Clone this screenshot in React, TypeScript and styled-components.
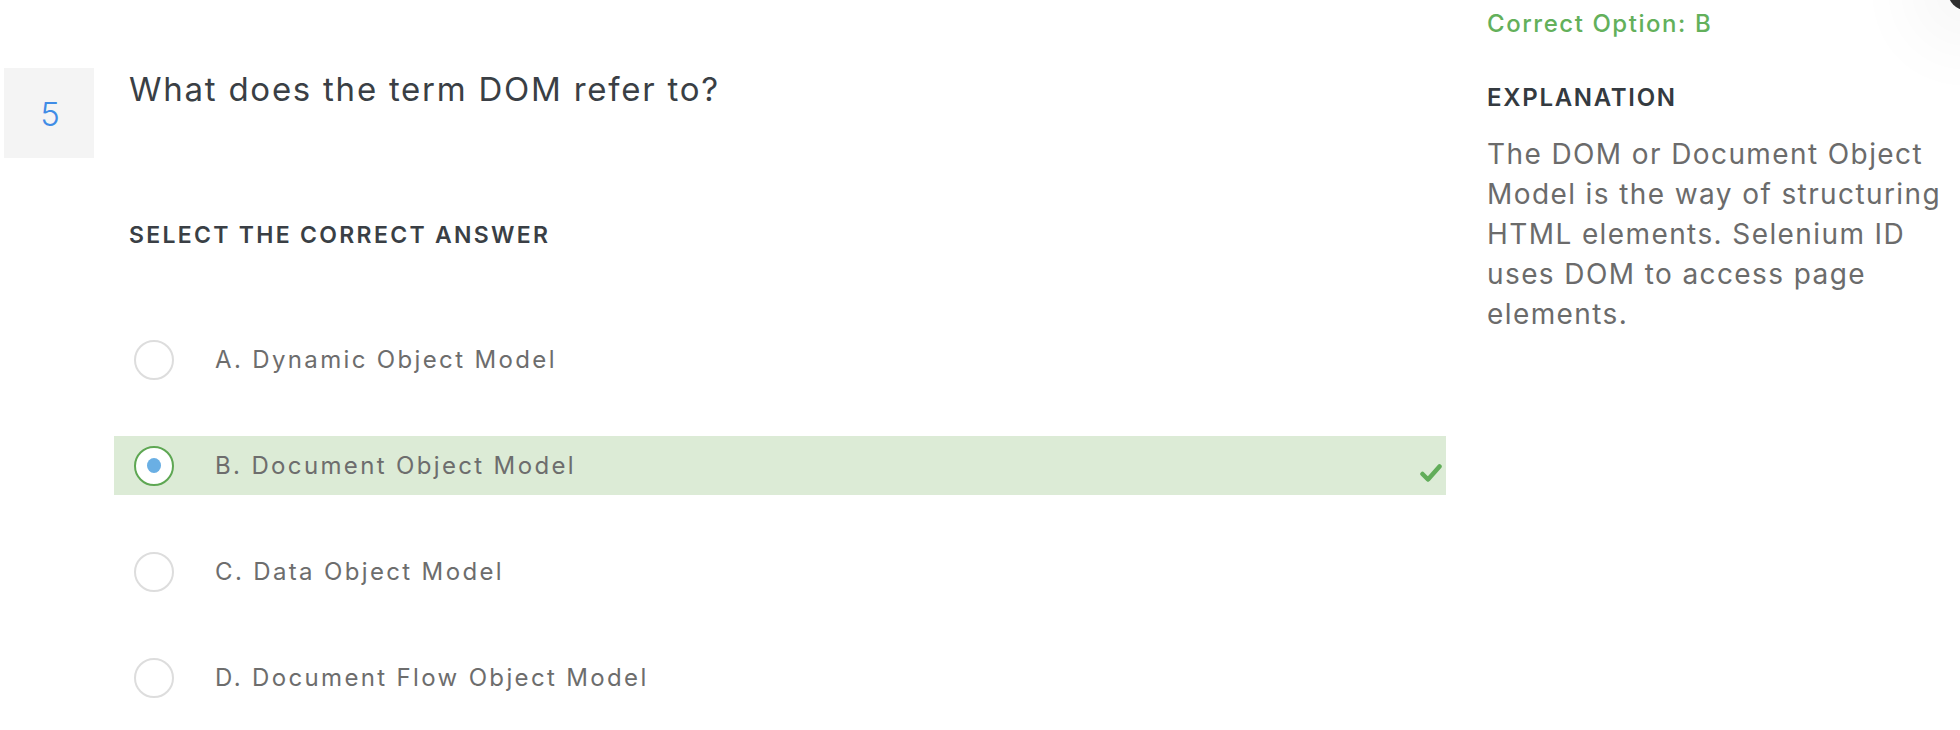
import React from "react";
import styled, { createGlobalStyle } from "styled-components";

const GlobalStyle = createGlobalStyle`
  html, body {
    margin: 0;
    padding: 0;
    background: #ffffff;
  }
  body {
    font-family: Inter, "Noto Sans", "Liberation Sans", sans-serif;
    -webkit-font-smoothing: antialiased;
    overflow: hidden;
  }
`;

const Page = styled.div`
  position: relative;
  display: flex;
  width: 1960px;
  height: 730px;
  overflow: hidden;
  background: #ffffff;
`;

const MainColumn = styled.div`
  flex: 0 0 1487px;
  display: flex;
  align-items: flex-start;
  padding: 68px 0 0 4px;
  box-sizing: border-box;
`;

const NumberBox = styled.div`
  flex: 0 0 90px;
  height: 90px;
  background: #f4f4f4;
  display: flex;
  align-items: center;
  justify-content: center;
  color: #3f8ce6;
  font-size: 33px;
  font-weight: 300;
  padding: 2px 0 0 2px;
  box-sizing: border-box;
`;

const QuestionBody = styled.div`
  margin-left: 35px;
  display: flex;
  flex-direction: column;
`;

const QuestionText = styled.h2`
  margin: 2px 0 0 0;
  font-size: 33px;
  line-height: 38px;
  font-weight: 400;
  color: #3a3f45;
  letter-spacing: 1.75px;
`;

const SectionLabel = styled.div`
  margin-top: 114px;
  font-size: 23px;
  line-height: 27px;
  font-weight: 600;
  color: #3a3f45;
  letter-spacing: 2.3px;
  text-transform: uppercase;
`;

const OptionList = styled.div`
  margin: 81px 0 0 -15px;
  width: 1332px;
  display: flex;
  flex-direction: column;
  gap: 47px;
`;

const OptionRow = styled.div<{ $correct?: boolean }>`
  height: 59px;
  display: flex;
  align-items: center;
  padding: 0 4px 0 20px;
  box-sizing: border-box;
  background: ${(p) => (p.$correct ? "#dcebd6" : "transparent")};
`;

const Radio = styled.span<{ $checked?: boolean }>`
  flex: 0 0 40px;
  height: 40px;
  border-radius: 50%;
  box-sizing: border-box;
  border: 2px solid ${(p) => (p.$checked ? "#5ea753" : "#dddddd")};
  background: #ffffff;
  display: flex;
  align-items: center;
  justify-content: center;
`;

const RadioDot = styled.span`
  width: 14px;
  height: 15px;
  border-radius: 50%;
  background: #6aafe4;
`;

const OptionLabel = styled.span`
  margin-left: 41px;
  flex: 1;
  font-size: 24px;
  line-height: 28px;
  color: #6d6d6d;
  letter-spacing: 2.35px;
`;

const CheckIcon = styled.svg`
  flex: 0 0 22px;
  width: 22px;
  height: 20px;
  margin-top: 14px;
`;

const SideColumn = styled.aside`
  flex: 1;
  padding-top: 10px;
  display: flex;
  flex-direction: column;
`;

const CorrectOption = styled.div`
  font-size: 24px;
  line-height: 28px;
  font-weight: 500;
  color: #63b05b;
  letter-spacing: 1.55px;
`;

const ExplanationTitle = styled.div`
  margin-top: 46px;
  font-size: 24px;
  line-height: 28px;
  font-weight: 600;
  color: #343a40;
  letter-spacing: 1.7px;
  text-transform: uppercase;
`;

const ExplanationText = styled.p`
  margin: 22px 0 0 0;
  font-size: 28px;
  line-height: 40px;
  color: #6b6b6b;
  letter-spacing: 1.4px;
`;

const CornerBadge = styled.div`
  position: absolute;
  top: -26px;
  right: -24px;
  width: 36px;
  height: 36px;
  border-radius: 50%;
  background: #2f2f2f;
  box-shadow: 0 0 70px 40px rgba(0, 0, 0, 0.035);
`;

type Option = { key: string; text: string; correct?: boolean };

const options: Option[] = [
  { key: "A", text: "Dynamic Object Model" },
  { key: "B", text: "Document Object Model", correct: true },
  { key: "C", text: "Data Object Model" },
  { key: "D", text: "Document Flow Object Model" },
];

export default function App() {
  return (
    <>
      <GlobalStyle />
      <Page>
        <MainColumn>
          <NumberBox>5</NumberBox>
          <QuestionBody>
            <QuestionText>What does the term DOM refer to?</QuestionText>
            <SectionLabel>Select the correct answer</SectionLabel>
            <OptionList>
              {options.map((o) => (
                <OptionRow key={o.key} $correct={o.correct}>
                  <Radio $checked={o.correct}>{o.correct && <RadioDot />}</Radio>
                  <OptionLabel>
                    {o.key}. {o.text}
                  </OptionLabel>
                  {o.correct && (
                    <CheckIcon viewBox="0 0 22 20" aria-hidden="true">
                      <path
                        d="M2.5 11 L8 16.5 L19.5 3.5"
                        fill="none"
                        stroke="#62ad5a"
                        strokeWidth="4.5"
                        strokeLinecap="round"
                        strokeLinejoin="round"
                      />
                    </CheckIcon>
                  )}
                </OptionRow>
              ))}
            </OptionList>
          </QuestionBody>
        </MainColumn>
        <SideColumn>
          <CorrectOption>Correct Option: B</CorrectOption>
          <ExplanationTitle>Explanation</ExplanationTitle>
          <ExplanationText>
            The DOM or Document Object Model is the way of structuring HTML
            elements. Selenium ID uses DOM to access page elements.
          </ExplanationText>
        </SideColumn>
        <CornerBadge />
      </Page>
    </>
  );
}
